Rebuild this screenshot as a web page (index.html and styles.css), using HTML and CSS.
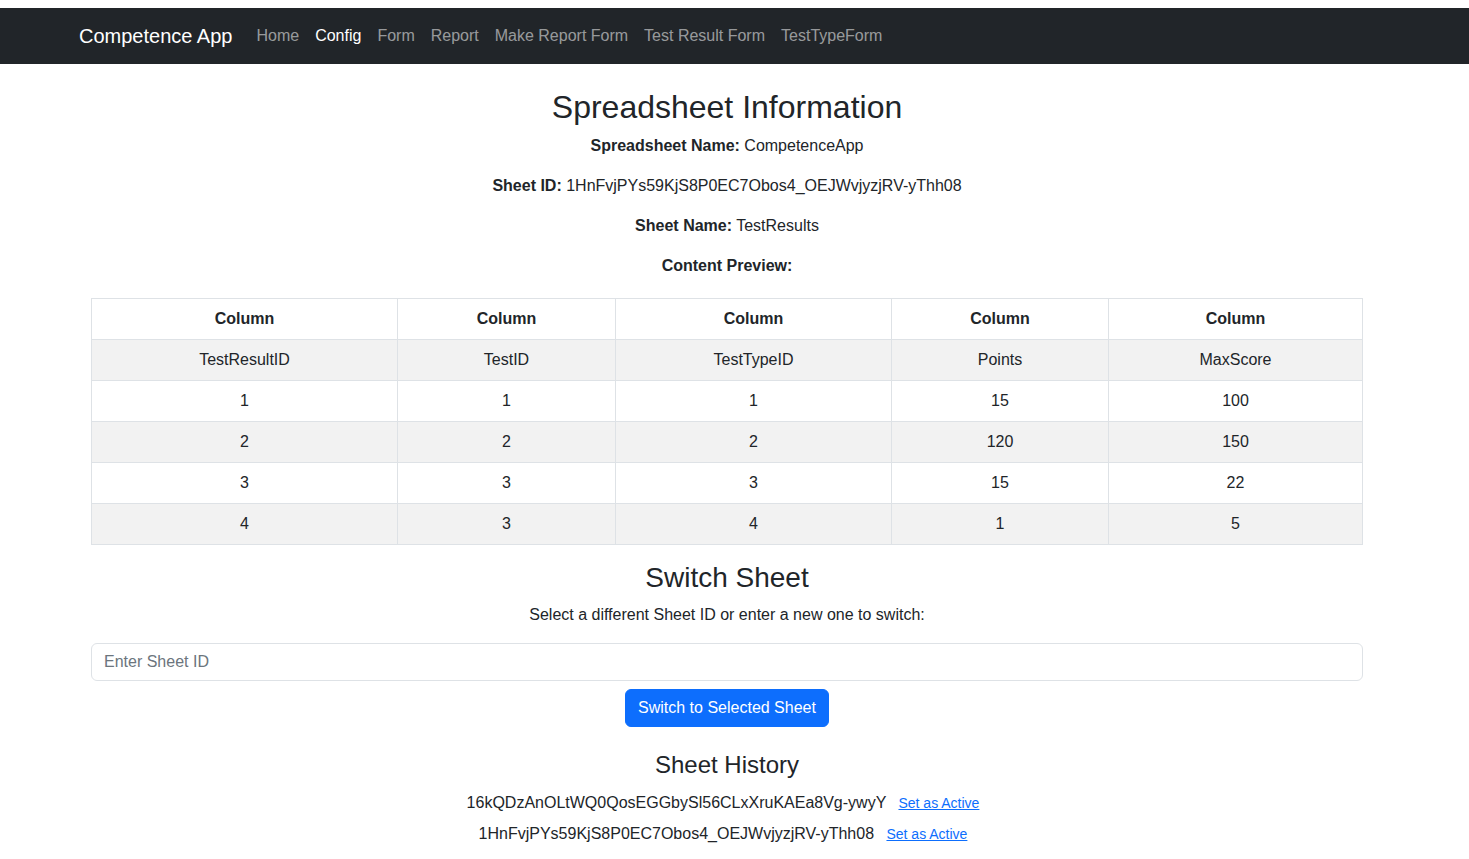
FILE: index.html
```html
<!DOCTYPE html>
<html lang="en">
<head>
<meta charset="utf-8">
<title>Competence App</title>
<link rel="stylesheet" href="styles.css">
</head>
<body>
<nav class="navbar">
  <div class="shell">
    <div class="container nav-inner">
      <a class="brand" href="#">Competence App</a>
      <ul class="nav-links">
        <li><a class="nav-link" href="#">Home</a></li>
        <li><a class="nav-link active" href="#">Config</a></li>
        <li><a class="nav-link" href="#">Form</a></li>
        <li><a class="nav-link" href="#">Report</a></li>
        <li><a class="nav-link" href="#">Make Report Form</a></li>
        <li><a class="nav-link" href="#">Test Result Form</a></li>
        <li><a class="nav-link" href="#">TestTypeForm</a></li>
      </ul>
    </div>
  </div>
</nav>
<div class="shell">
  <main class="container main">
    <div class="content">
      <h2 class="title">Spreadsheet Information</h2>
      <p><strong>Spreadsheet Name:</strong> CompetenceApp</p>
      <p><strong>Sheet ID:</strong> 1HnFvjPYs59KjS8P0EC7Obos4_OEJWvjyzjRV-yThh08</p>
      <p><strong>Sheet Name:</strong> TestResults</p>
      <p><strong>Content Preview:</strong></p>
      <table class="data-table">
        <colgroup>
          <col class="c1"><col class="c2"><col class="c3"><col class="c4"><col class="c5">
        </colgroup>
        <thead>
          <tr><th>Column</th><th>Column</th><th>Column</th><th>Column</th><th>Column</th></tr>
        </thead>
        <tbody>
          <tr><td>TestResultID</td><td>TestID</td><td>TestTypeID</td><td>Points</td><td>MaxScore</td></tr>
          <tr><td>1</td><td>1</td><td>1</td><td>15</td><td>100</td></tr>
          <tr><td>2</td><td>2</td><td>2</td><td>120</td><td>150</td></tr>
          <tr><td>3</td><td>3</td><td>3</td><td>15</td><td>22</td></tr>
          <tr><td>4</td><td>3</td><td>4</td><td>1</td><td>5</td></tr>
        </tbody>
      </table>

      <h3 class="subtitle">Switch Sheet</h3>
      <p>Select a different Sheet ID or enter a new one to switch:</p>
      <form class="switch-form">
        <input class="form-control" type="text" placeholder="Enter Sheet ID">
        <div class="btn-row"><button type="button" class="btn-primary">Switch to Selected Sheet</button></div>
      </form>

      <h4 class="history-title">Sheet History</h4>
      <ul class="history">
        <li>16kQDzAnOLtWQ0QosEGGbySl56CLxXruKAEa8Vg-ywyY <a class="btn-link" href="#">Set as Active</a></li>
        <li>1HnFvjPYs59KjS8P0EC7Obos4_OEJWvjyzjRV-yThh08 <a class="btn-link" href="#">Set as Active</a></li>
      </ul>
    </div>
  </main>
</div>
</body>
</html>
```

FILE: styles.css
```css
* { box-sizing: border-box; }

html, body {
  margin: 0;
  padding: 0;
}

body {
  padding-top: 8px;
  font-family: "Liberation Sans", Arial, sans-serif;
  font-size: 16px;
  line-height: 1.5;
  color: #212529;
  background: #fff;
}

.shell {
  margin-right: 15px;
}

.container {
  max-width: 1320px;
  margin: 0 auto;
  padding: 0 12px;
}

/* Navbar */
.navbar {
  background: #212529;
  padding: 8px 0;
}

.nav-inner {
  display: flex;
  align-items: center;
}

.brand {
  font-size: 20px;
  line-height: 30px;
  padding: 5px 0;
  margin-right: 16px;
  color: #fff;
  text-decoration: none;
  white-space: nowrap;
}

.nav-links {
  display: flex;
  list-style: none;
  margin: 0;
  padding: 0;
}

.nav-link {
  display: block;
  padding: 8px;
  color: rgba(255, 255, 255, 0.55);
  text-decoration: none;
  line-height: 24px;
}

.nav-link.active {
  color: #fff;
}

/* Main */
.main {
  margin-top: 24px;
}

.content {
  padding: 0 12px;
  text-align: center;
}

.title {
  font-size: 32px;
  font-weight: 400;
  line-height: 1.2;
  margin: 0 0 8px;
}

.subtitle {
  font-size: 28px;
  font-weight: 400;
  line-height: 1.2;
  margin: 0 0 8px;
}

.history-title {
  font-size: 24px;
  font-weight: 400;
  line-height: 1.2;
  margin: 0 0 7px;
}

p {
  margin: 0 0 16px;
}

strong {
  font-weight: 700;
}

/* Table */
.data-table {
  width: 100%;
  table-layout: fixed;
  border-collapse: collapse;
  margin: 20px 0 16px;
  border: 1px solid #dee2e6;
}

.c1 { width: 306px; }
.c2 { width: 218px; }
.c3 { width: 276px; }
.c4 { width: 217px; }
.c5 { width: 254px; }

.data-table th,
.data-table td {
  border: 1px solid #dee2e6;
  padding: 8px;
  line-height: 24px;
  text-align: center;
  vertical-align: top;
}

.data-table th {
  font-weight: 700;
}

.data-table tbody tr:nth-child(odd) td {
  background: #f2f2f2;
}

/* Form */
.switch-form {
  margin: 0 0 24px;
}

.form-control {
  display: block;
  width: 100%;
  height: 38px;
  padding: 6px 12px;
  font-family: inherit;
  font-size: 16px;
  line-height: 24px;
  color: #212529;
  border: 1px solid #dee2e6;
  border-radius: 6px;
  background: #fff;
  margin-bottom: 8px;
}

.form-control::placeholder {
  color: #6c757d;
  opacity: 1;
}

.btn-row {
  text-align: center;
  line-height: 0;
}

.btn-primary {
  display: inline-block;
  height: 38px;
  padding: 6px 12px;
  font-family: inherit;
  font-size: 16px;
  line-height: 24px;
  color: #fff;
  background: #0d6efd;
  border: 1px solid #0d6efd;
  border-radius: 6px;
  cursor: pointer;
}

/* History */
.history {
  list-style: none;
  margin: 0;
  padding: 0;
}

.history li {
  line-height: 31px;
}

.btn-link {
  display: inline-block;
  padding: 0 8px;
  font-size: 14px;
  line-height: 29px;
  color: #0d6efd;
  text-decoration: underline;
  vertical-align: bottom;
}
```
